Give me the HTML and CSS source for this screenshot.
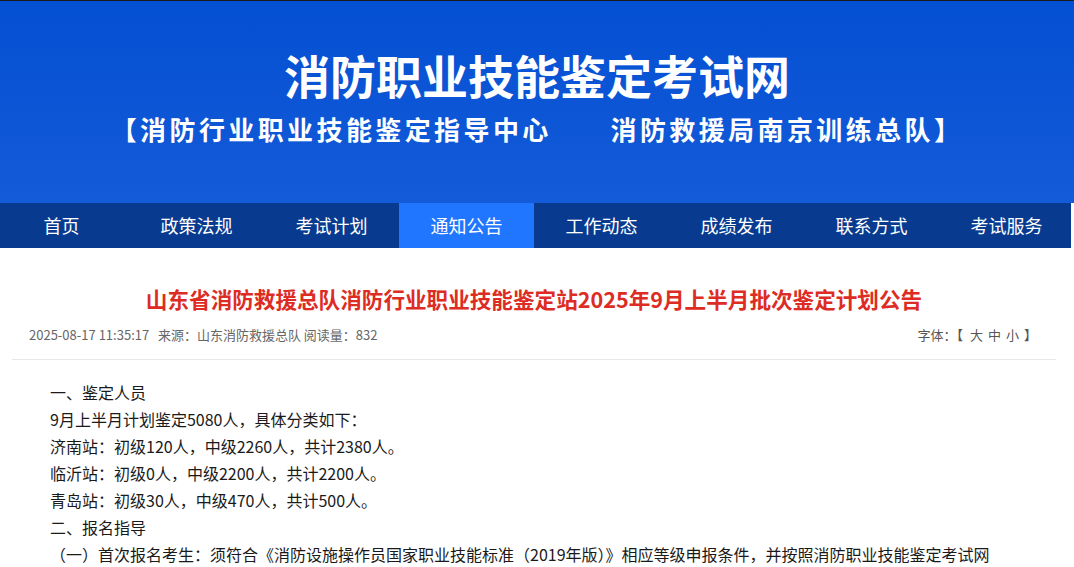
FILE: index.html
```html
<!DOCTYPE html>
<html lang="zh-CN">

<head>
    <meta charset="UTF-8">
    <meta name="viewport" content="width=device-width, initial-scale=1.0">
    <title>消防职业技能鉴定考试网</title>
    <link rel="stylesheet" href="styles.css">
</head>

<body>
    <header class="banner">
        <h1 class="siteTitle">消防职业技能鉴定考试网</h1>
        <p class="siteSub">【消防行业职业技能鉴定指导中心　　消防救援局南京训练总队】</p>
    </header>

    <nav class="nav">
        <ul class="navList">
            <li><a href="#">首页</a></li>
            <li><a href="#">政策法规</a></li>
            <li><a href="#">考试计划</a></li>
            <li class="active"><a href="#">通知公告</a></li>
            <li><a href="#">工作动态</a></li>
            <li><a href="#">成绩发布</a></li>
            <li><a href="#">联系方式</a></li>
            <li><a href="#">考试服务</a></li>
        </ul>
    </nav>

    <div class="article">
        <h2 class="articleTitle">山东省消防救援总队消防行业职业技能鉴定站2025年9月上半月批次鉴定计划公告</h2>
        <div class="articleMeta">
            <span class="metaInfo">2025-08-17 11:35:17&nbsp;&nbsp;&nbsp;来源：山东消防救援总队 阅读量：832</span>
            <span class="fontSwitch">字体：【<a href="#">大</a><a href="#">中</a><a href="#">小</a>】</span>
        </div>
        <div class="articleBody">
            <p>一、鉴定人员</p>
            <p>9月上半月计划鉴定5080人，具体分类如下：</p>
            <p>济南站：初级120人，中级2260人，共计2380人。</p>
            <p>临沂站：初级0人，中级2200人，共计2200人。</p>
            <p>青岛站：初级30人，中级470人，共计500人。</p>
            <p>二、报名指导</p>
            <p>（一）首次报名考生：须符合《消防设施操作员国家职业技能标准（2019年版）》相应等级申报条件，并按照消防职业技能鉴定考试网</p>
        </div>
    </div>
</body>

</html>
```

FILE: styles.css
```css
body {
    margin: 0;
    font-family: "Noto Sans CJK SC", "Noto Sans", sans-serif;
    background: #fff;
}

.banner {
    height: 203px;
    border-top: 1px solid #1b1b1b;
    background: linear-gradient(180deg, #0450d3 0%, #0d56d6 60%, #135bd8 100%);
    color: #fff;
    text-align: center;
    padding-top: 46px;
    box-sizing: border-box;
}

.siteTitle {
    margin: 0;
    font-size: 46px;
    line-height: 55px;
    font-weight: bold;
}

.siteSub {
    margin: 9px 0 0;
    font-size: 26px;
    line-height: 36px;
    font-weight: bold;
    letter-spacing: 3.4px;
}

.nav {
    height: 45px;
    margin-right: 3px;
    background: #083b90;
    overflow: hidden;
}

.navList {
    display: flex;
    width: 1080px;
    margin: 0 0 0 -6px;
    padding: 0;
    list-style: none;
}

.navList li {
    width: 135px;
    height: 45px;
}

.navList a {
    display: block;
    line-height: 45px;
    text-align: center;
    color: #fff;
    font-size: 18px;
    text-decoration: none;
}

.navList .active {
    background: #2176ff;
}

.article {
    width: 1044px;
    margin-left: 12px;
}

.articleTitle {
    margin: 0;
    padding-top: 36px;
    font-size: 21.6px;
    line-height: 30px;
    font-weight: bold;
    color: #dd2c23;
    text-align: center;
}

.articleMeta {
    display: flex;
    justify-content: space-between;
    margin-top: 11px;
    padding: 0 19px 14px 17px;
    border-bottom: 1px solid #e8e8e8;
    font-size: 13px;
    line-height: 20px;
    color: #666;
}

.fontSwitch {
    color: #555;
}

.fontSwitch a {
    color: #555;
    text-decoration: none;
    margin: 0 2.5px;
}

.fontSwitch a:first-child {
    margin-left: 7px;
}

.fontSwitch a:last-child {
    margin-right: 5px;
}

.articleBody {
    padding: 19px 0 0 38px;
    font-size: 16px;
    line-height: 27px;
    color: #1a1a1a;
}

.articleBody p {
    margin: 0;
}
```
